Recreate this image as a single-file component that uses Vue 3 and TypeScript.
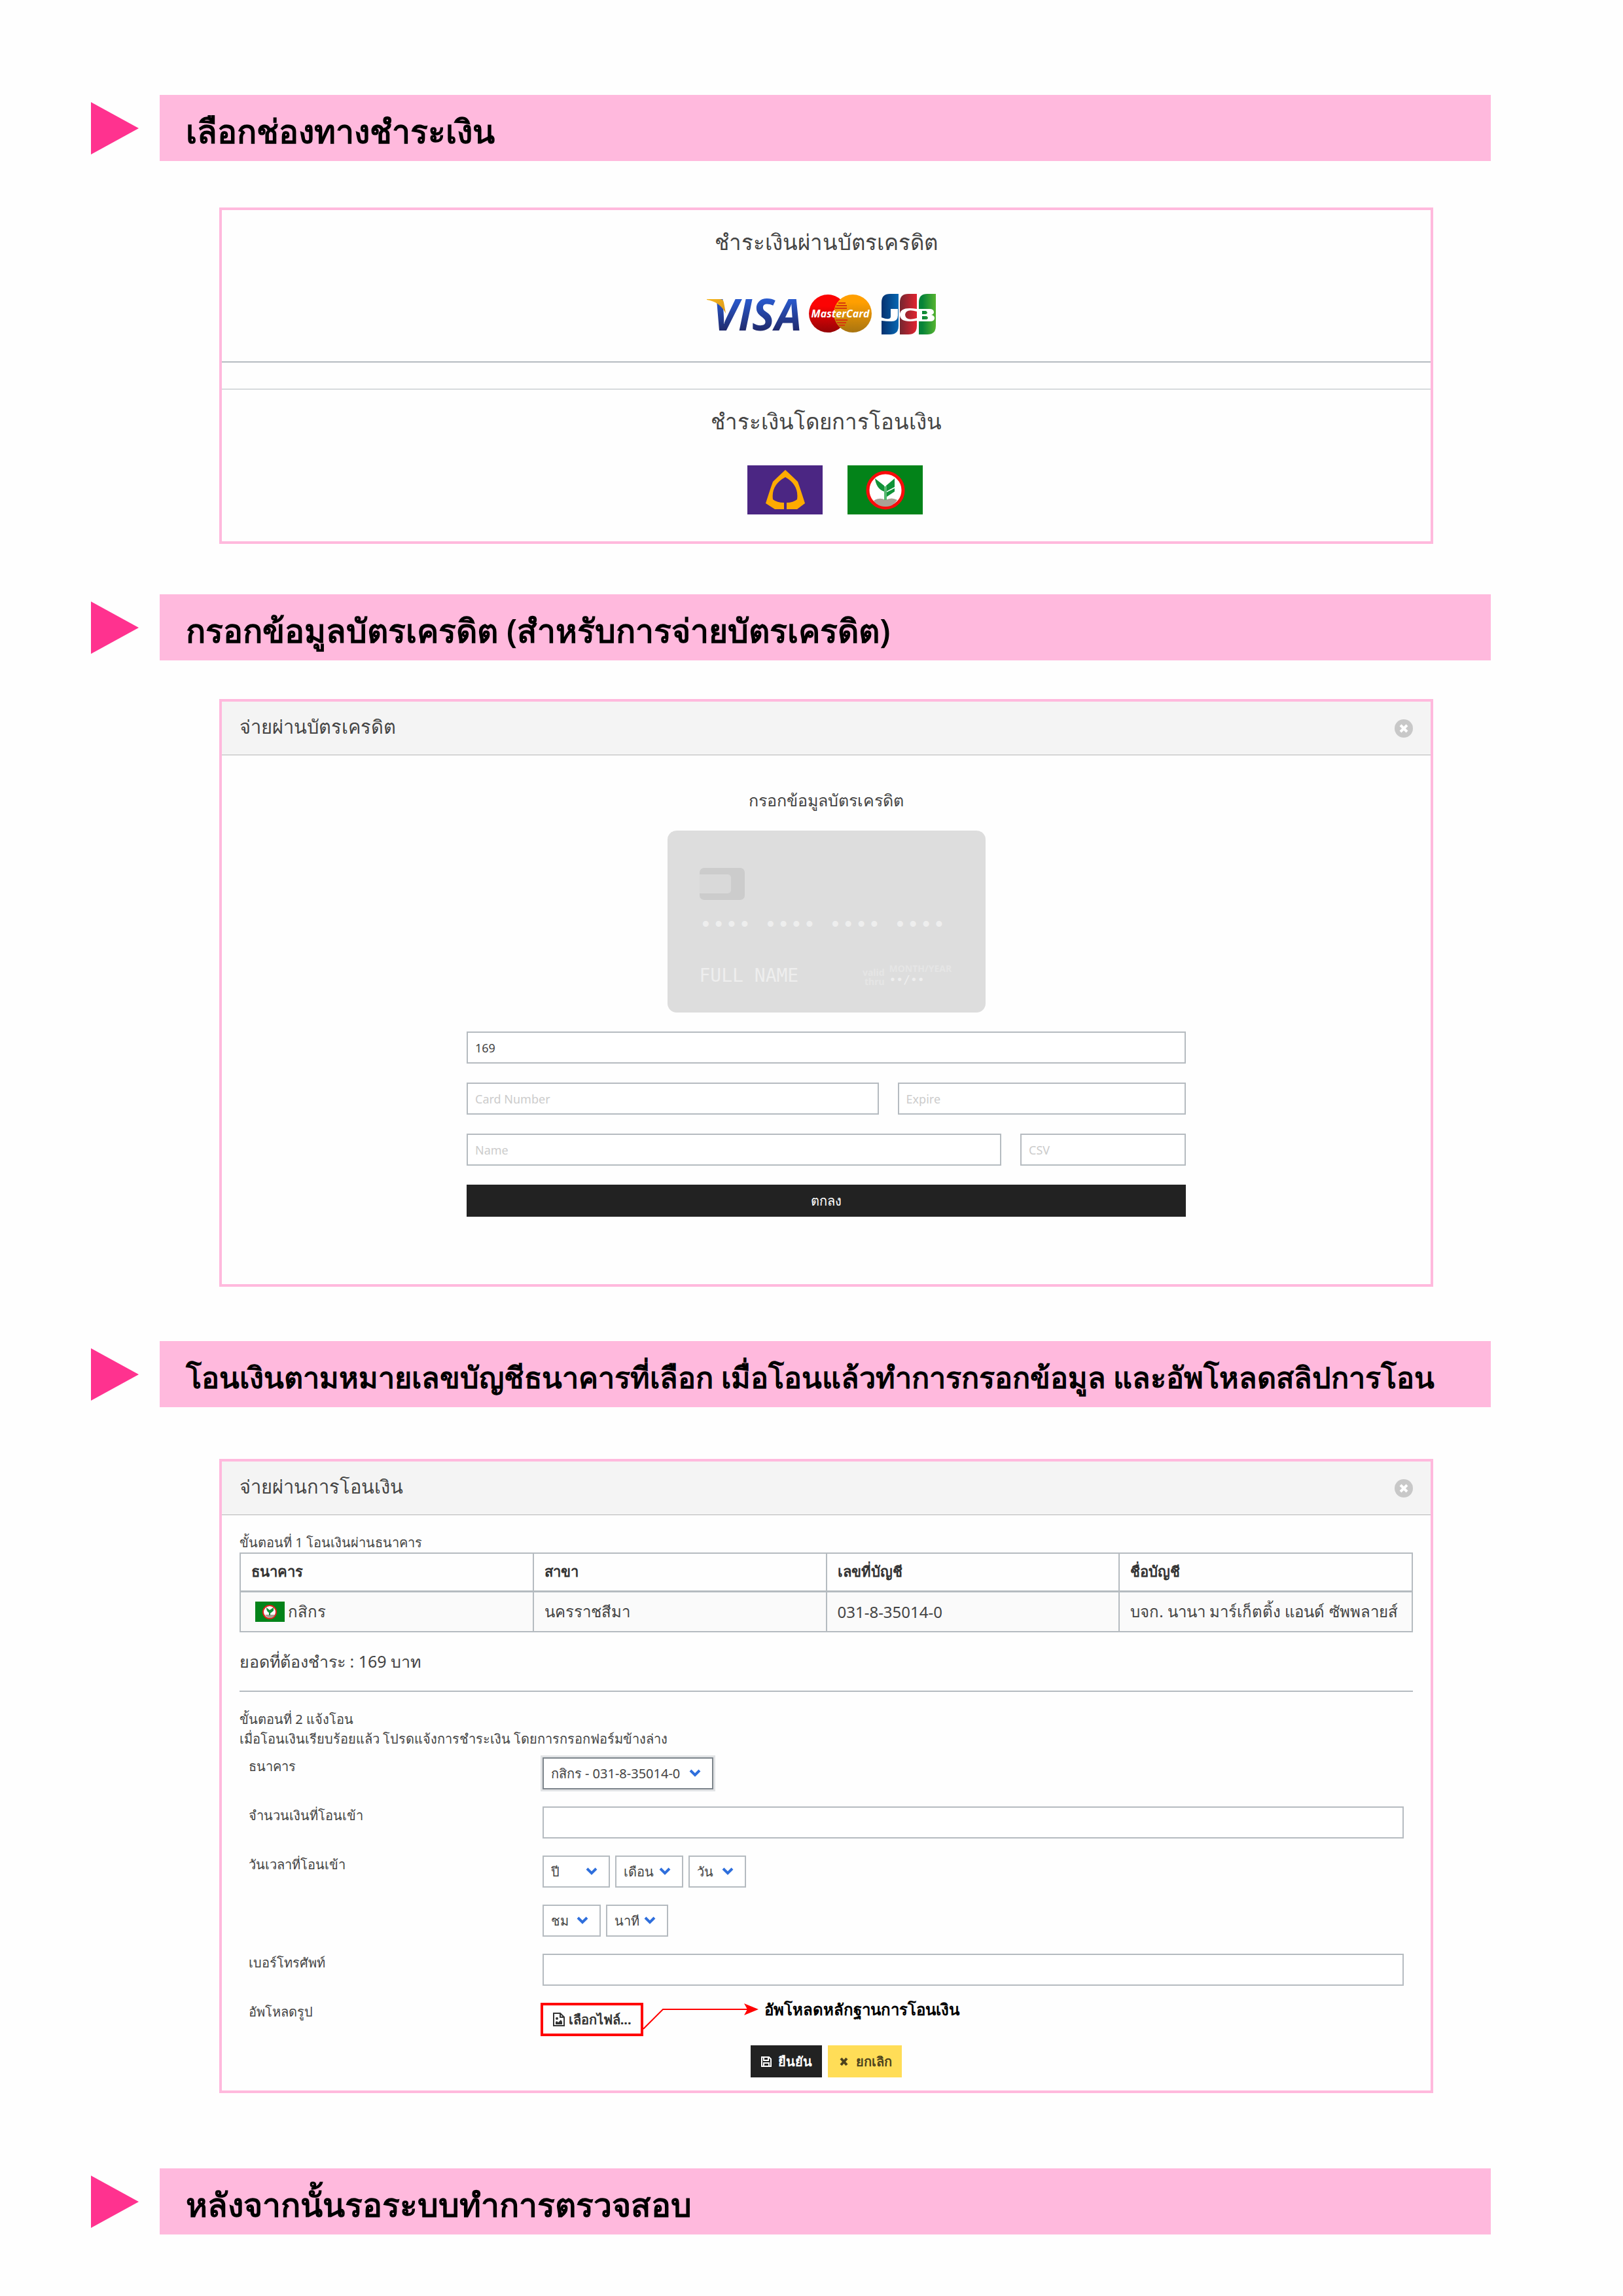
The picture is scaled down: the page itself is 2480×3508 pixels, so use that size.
<script setup lang="ts">
import { ref } from 'vue'

interface Account {
  bank: string
  branch: string
  number: string
  name: string
}

const accounts: Account[] = [
  { bank: 'กสิกร', branch: 'นครราชสีมา', number: '031-8-35014-0', name: 'บจก. นานา มาร์เก็ตติ้ง แอนด์ ซัพพลายส์' },
]

const dateParts = [
  { id: 'year', text: 'ปี', width: 103 },
  { id: 'month', text: 'เดือน', width: 104 },
  { id: 'day', text: 'วัน', width: 88 },
]
const timeParts = [
  { id: 'hour', text: 'ชม', width: 89 },
  { id: 'minute', text: 'นาที', width: 95 },
]

const amount = ref('169')
</script>

<template>
  <main class="page">
    <header class="step">
      <svg class="arrow" viewBox="0 0 73 80" aria-hidden="true"><path d="M0 0 73 40 0 80z" /></svg>
      <h2 class="banner">เลือกช่องทางชำระเงิน</h2>
    </header>

    <section class="panel methods">
      <div class="method">
        <h3 class="method-title">ชำระเงินผ่านบัตรเครดิต</h3>
        <svg class="brands" viewBox="0 0 366 66" role="img" aria-label="VISA MasterCard JCB">
          <defs>
            <linearGradient id="visa" x1="0" y1="0" x2="0" y2="1">
              <stop offset="0.2" stop-color="#2a5fd8" /><stop offset="0.8" stop-color="#20296b" />
            </linearGradient>
            <linearGradient id="gold" x1="0" y1="0" x2="1" y2="1">
              <stop offset="0" stop-color="#f6b61c" /><stop offset="1" stop-color="#d9961a" />
            </linearGradient>
            <linearGradient id="mcr" x1="0" y1="0" x2="0" y2="1">
              <stop offset="0.3" stop-color="#fb0404" /><stop offset="1" stop-color="#950306" />
            </linearGradient>
            <linearGradient id="mcy" x1="0" y1="0" x2="0" y2="1">
              <stop offset="0.2" stop-color="#ff9f00" /><stop offset="1" stop-color="#a87410" />
            </linearGradient>
            <linearGradient id="jb"><stop offset="0" stop-color="#05316f" /><stop offset="1" stop-color="#0767b2" /></linearGradient>
            <linearGradient id="jr"><stop offset="0" stop-color="#75262f" /><stop offset="1" stop-color="#e12330" /></linearGradient>
            <linearGradient id="jg"><stop offset="0.2" stop-color="#068338" /><stop offset="1" stop-color="#55b430" /></linearGradient>
          </defs>
          <text class="visa" x="9" y="57" fill="url(#visa)">VISA</text>
          <path d="M0 9h20q5 0 6 5l3 17Q20 13 0 10z" fill="url(#gold)" />
          <circle cx="185" cy="31" r="29" fill="url(#mcr)" />
          <circle cx="223" cy="31" r="29" fill="url(#mcy)" />
          <path d="M201 15h11M198 19h16M196 23h18M197 41h18M199 45h14M202 49h9" stroke="#d6390c" stroke-width="2" />
          <text class="master" x="204" y="37">MasterCard</text>
          <path d="M267 14Q267 1 280 1h13v49q0 13-13 13h-13z" fill="url(#jb)" />
          <path d="M295 14Q295 1 308 1h13v49q0 13-13 13h-13z" fill="url(#jr)" />
          <path d="M324 14Q324 1 337 1h13v49q0 13-13 13h-13z" fill="url(#jg)" />
          <path d="M267 37q13 5 14-1V24h11v10q0 9-10 9-8 0-15-1z" fill="#fff" />
          <path d="M321 28q-17-5-18 5 1 10 18 5v4q-26 4-26-9 0-13 26-9z" fill="#fff" />
          <path fill-rule="evenodd" d="M324 24h16q7 0 7 5 0 3-4 4 5 1 5 5 0 5-7 5h-17zM329 27v5h6q4-2 0-5zM329 35v5h7q4-2 0-5z" fill="#fff" />
        </svg>
      </div>
      <hr class="rule" />
      <div class="method transfer">
        <h3 class="method-title">ชำระเงินโดยการโอนเงิน</h3>
        <div class="flags">
          <svg class="flag" viewBox="0 0 115 75" role="img" aria-label="ไทยพาณิชย์">
            <path d="M0 0h115v75H0z" fill="#4b2683" />
            <path d="M58 7Q70 18 77 25Q82 39 88 58L76 67H60V57Q70 57 76 52Q79 30 58 18Q36 30 39 52Q45 57 56 57V67H42L28 58Q34 39 39 25Q46 18 58 7z" fill="#ffab00" />
          </svg>
          <svg class="flag" viewBox="0 0 115 75" role="img" aria-label="กสิกรไทย">
            <path d="M0 0h115v75H0z" fill="#038319" />
            <circle cx="58" cy="38" r="27" fill="#fff" stroke="#f90b0b" stroke-width="5" />
            <path d="M40 54q9-6 18-1 10-5 18 0-6 10-18 10T40 54z" fill="#aaa096" />
            <path d="M42 20 56 31v9q-12-4-14-20zM72 20v13L59 40v-9zM72 35v5L60 48v-7z" fill="#109338" />
            <path d="M58 32v21" stroke="#58b770" stroke-width="4" />
          </svg>
        </div>
      </div>
    </section>

    <header class="step step-card">
      <svg class="arrow" viewBox="0 0 73 80" aria-hidden="true"><path d="M0 0 73 40 0 80z" /></svg>
      <h2 class="banner">กรอกข้อมูลบัตรเครดิต (สำหรับการจ่ายบัตรเครดิต)</h2>
    </header>

    <section class="panel panel-card">
      <div class="panel-head">
        <h3 class="panel-title">จ่ายผ่านบัตรเครดิต</h3>
        <button class="close" type="button" aria-label="ปิด">
          <svg viewBox="0 0 28 28"><circle cx="14" cy="14" r="14" /><path d="m9 9 10 10M19 9 9 19" /></svg>
        </button>
      </div>
      <div class="card-body">
        <h4 class="card-title">กรอกข้อมูลบัตรเครดิต</h4>
        <div class="credit-card">
          <div class="chip"><span class="chip-inner"></span></div>
          <div class="card-number">•••• •••• •••• ••••</div>
          <div class="card-foot">
            <span class="card-name">FULL NAME</span>
            <span class="valid">valid<br />thru</span>
            <span class="expiry"><small class="expiry-label">MONTH/YEAR</small><span>••/••</span></span>
          </div>
        </div>
        <form class="card-form" @submit.prevent>
          <input v-model="amount" class="field" type="text" aria-label="จำนวนเงิน" />
          <div class="row">
            <input class="field number" type="text" placeholder="Card Number" aria-label="Card Number" />
            <input class="field expire" type="text" placeholder="Expire" aria-label="Expire" />
          </div>
          <div class="row">
            <input class="field name" type="text" placeholder="Name" aria-label="Name" />
            <input class="field csv" type="text" placeholder="CSV" aria-label="CSV" />
          </div>
          <button class="submit" type="submit">ตกลง</button>
        </form>
      </div>
    </section>

    <header class="step step-transfer">
      <svg class="arrow" viewBox="0 0 73 80" aria-hidden="true"><path d="M0 0 73 40 0 80z" /></svg>
      <h2 class="banner banner-long">โอนเงินตามหมายเลขบัญชีธนาคารที่เลือก เมื่อโอนแล้วทำการกรอกข้อมูล และอัพโหลดสลิปการโอน</h2>
    </header>

    <section class="panel panel-transfer">
      <div class="panel-head">
        <h3 class="panel-title">จ่ายผ่านการโอนเงิน</h3>
        <button class="close" type="button" aria-label="ปิด">
          <svg viewBox="0 0 28 28"><circle cx="14" cy="14" r="14" /><path d="m9 9 10 10M19 9 9 19" /></svg>
        </button>
      </div>
      <div class="transfer-body">
        <p class="note">ขั้นตอนที่ 1 โอนเงินผ่านธนาคาร</p>
        <table class="accounts">
          <thead>
            <tr><th scope="col">ธนาคาร</th><th scope="col">สาขา</th><th scope="col">เลขที่บัญชี</th><th scope="col">ชื่อบัญชี</th></tr>
          </thead>
          <tbody>
            <tr v-for="a in accounts" :key="a.number">
              <td>
                <span class="bank">
                  <svg class="mini-flag" viewBox="0 0 45 31" aria-hidden="true">
                    <path d="M0 0h45v31H0z" fill="#038319" />
                    <circle cx="22" cy="16" r="10" fill="#fff" stroke="#e2201f" stroke-width="2" />
                    <path d="M15 20h15q-2 5-7 5t-8-5z" fill="#aaa096" />
                    <path d="M17 9l5 4 6-4v5l-5 4v3h-2v-4q-4-2-4-8z" fill="#109338" />
                  </svg>{{ a.bank }}
                </span>
              </td>
              <td>{{ a.branch }}</td>
              <td>{{ a.number }}</td>
              <td>{{ a.name }}</td>
            </tr>
          </tbody>
        </table>
        <p class="total">ยอดที่ต้องชำระ : 169 บาท</p>
        <hr class="rule" />
        <p class="note note-second">ขั้นตอนที่ 2 แจ้งโอน<br />เมื่อโอนเงินเรียบร้อยแล้ว โปรดแจ้งการชำระเงิน โดยการกรอกฟอร์มข้างล่าง</p>

        <form class="transfer-form" @submit.prevent>
          <label class="label" for="bank">ธนาคาร</label>
          <div class="controls">
            <span class="select focused">
              <select id="bank" style="width: 261px"><option>กสิกร - 031-8-35014-0</option></select>
              <svg class="chevron" viewBox="0 0 18 13" aria-hidden="true"><path d="m2 3 7 7 7-7" /></svg>
            </span>
          </div>

          <label class="label" for="paid">จำนวนเงินที่โอนเข้า</label>
          <input id="paid" class="field" type="text" />

          <label class="label" for="year">วันเวลาที่โอนเข้า</label>
          <div class="controls">
            <span v-for="p in dateParts" :key="p.id" class="select">
              <select :id="p.id" :aria-label="p.text" :style="{ width: p.width + 'px' }"><option>{{ p.text }}</option></select>
              <svg class="chevron" viewBox="0 0 18 13" aria-hidden="true"><path d="m2 3 7 7 7-7" /></svg>
            </span>
          </div>

          <div class="controls time">
            <span v-for="p in timeParts" :key="p.id" class="select">
              <select :id="p.id" :aria-label="p.text" :style="{ width: p.width + 'px' }"><option>{{ p.text }}</option></select>
              <svg class="chevron" viewBox="0 0 18 13" aria-hidden="true"><path d="m2 3 7 7 7-7" /></svg>
            </span>
          </div>

          <label class="label" for="phone">เบอร์โทรศัพท์</label>
          <input id="phone" class="field" type="tel" />

          <label class="label" for="slip">อัพโหลดรูป</label>
          <div class="upload">
            <label class="file">
              <input id="slip" class="file-input" type="file" accept="image/*" />
              <svg class="file-icon" viewBox="0 0 18 21" aria-hidden="true">
                <path d="M1 1h10l6 6v13H1zM11 1v6h6" fill="none" stroke="currentColor" stroke-width="2" />
                <path d="M4 18v-4l2-1 2 2 4-4 2 3v4z" fill="currentColor" /><circle cx="6" cy="9" r="2" fill="currentColor" />
              </svg>
              เลือกไฟล์...
            </label>
            <svg class="pointer" viewBox="0 0 176 42" aria-hidden="true">
              <path d="M0 40 30 10H160" fill="none" stroke="#f00" stroke-width="2" /><path d="m154 1 22 9-22 9 5-9z" fill="#f00" />
            </svg>
            <span class="hint">อัพโหลดหลักฐานการโอนเงิน</span>
          </div>

          <div class="actions">
            <button class="button confirm" type="submit">
              <svg viewBox="0 0 18 18" aria-hidden="true"><path d="M2 2h11l3 3v11H2zM5 2v5h7V2M5 16v-5h8v5" /></svg>ยืนยัน
            </button>
            <button class="button cancel" type="button">
              <svg viewBox="0 0 18 18" aria-hidden="true"><path class="cross" d="m4 4 9 10M13 4 4 14" /></svg>ยกเลิก
            </button>
          </div>
        </form>
      </div>
    </section>

    <header class="step step-last">
      <svg class="arrow" viewBox="0 0 73 80" aria-hidden="true"><path d="M0 0 73 40 0 80z" /></svg>
      <h2 class="banner">หลังจากนั้นรอระบบทำการตรวจสอบ</h2>
    </header>
  </main>
</template>

<style>
body {
  margin: 0;
  background: #fefefe;
}
</style>

<style scoped>
.page,
.page * {
  box-sizing: border-box;
}
.page {
  padding: 145px 202px 93px 139px;
  background: #fefefe;
  color: #444;
  font-family: "Noto Sans", sans-serif;
  font-size: 20px;
}
h2,
h3,
h4,
p {
  margin: 0;
  font-weight: 400;
}
button,
input,
select {
  font-family: inherit;
  color: inherit;
  margin: 0;
}

.step {
  display: flex;
  align-items: center;
  gap: 32px;
}
.step-card { margin-top: 77px; }
.step-transfer { margin-top: 83px; }
.step-last { margin-top: 115px; }
.arrow {
  flex: none;
  width: 73px;
  height: 80px;
  fill: #ff328f;
}
.banner {
  flex: 1;
  min-width: 0;
  height: 101px;
  padding: 0 40px;
  background: #ffb9dd;
  color: #000;
  font-size: 50px;
  font-weight: 600;
  line-height: 110px;
  white-space: nowrap;
}
.banner-long { font-size: 45px; }

.panel {
  margin: 71px 88px 0 196px;
  border: 4px solid #ffb9dd;
}
.panel-card { margin-top: 59px; }
.panel-transfer { margin-top: 79px; }

.rule {
  height: 2px;
  margin: 0;
  border: 0;
  background: #b5bbc0;
}
.method {
  display: flex;
  flex-direction: column;
  align-items: center;
  padding: 25px 0 38px;
}
.transfer {
  margin-top: 40px;
  padding-bottom: 41px;
  border-top: 1px solid #b5bbc0;
}
.method-title {
  font-size: 33px;
  line-height: 48px;
}
.brands {
  width: 366px;
  height: 66px;
  margin-top: 54px;
  overflow: visible;
}
.visa {
  font: italic 700 66px "Open Sans", sans-serif;
}
.master {
  font: italic 700 16px "Open Sans", sans-serif;
  text-anchor: middle;
  fill: #fff;
}
.flags {
  display: flex;
  gap: 38px;
  margin: 43px 0 0 26px;
}
.flag {
  width: 115px;
  height: 75px;
}

.panel-head {
  display: flex;
  align-items: center;
  justify-content: space-between;
  height: 82px;
  padding: 0 27px;
  border-bottom: 1px solid #b5b5b5;
  background: #f4f4f4;
}
.panel-title {
  padding-bottom: 6px;
  font-size: 29px;
  line-height: 40px;
}
.close {
  width: 28px;
  height: 28px;
  padding: 0;
  border: 0;
  background: none;
}
.close svg {
  display: block;
  fill: #c8c8c8;
  stroke: #fff;
}
.close circle { stroke: none; }
.close path { stroke-width: 4; }

.card-body {
  display: flex;
  flex-direction: column;
  align-items: center;
  padding: 48px 27px 103px;
}
.card-title {
  font-size: 25px;
  line-height: 40px;
}
.credit-card {
  width: 486px;
  height: 278px;
  margin-top: 27px;
  padding: 57px 49px 0;
  border-radius: 14px;
  background: #ddd;
  color: #eee;
  font-family: "DejaVu Sans Mono", monospace;
}
.chip {
  width: 69px;
  height: 49px;
  padding-top: 10px;
  border-radius: 7px;
  background: #ccc;
}
.chip-inner {
  display: block;
  width: 48px;
  height: 29px;
  border-radius: 0 5px 5px 0;
  background: #d9d9d9;
}
.card-number {
  margin-top: 20px;
  font-family: "Liberation Mono", monospace;
  font-size: 33px;
  line-height: 40px;
  white-space: nowrap;
}
.card-foot {
  display: flex;
  align-items: flex-end;
  margin-top: 38px;
}
.card-name {
  flex: 1;
  font-size: 28px;
  line-height: 32px;
}
.valid,
.expiry-label {
  color: #e5e5e5;
  font: 700 14px/14px "Noto Sans", sans-serif;
}
.valid {
  margin-right: 7px;
  text-align: right;
}
.expiry {
  display: flex;
  flex-direction: column;
  width: 98px;
  font-size: 18px;
  line-height: 20px;
}
.card-form {
  display: flex;
  flex-direction: column;
  gap: 29px;
  width: 100%;
  max-width: 1099px;
  margin-top: 29px;
}
.row {
  display: flex;
  gap: 29px;
}
.field {
  width: 100%;
  height: 49px;
  padding: 0 11px;
  border: 2px solid #b5bbc0;
  border-radius: 0;
  background: #fff;
  font-size: 18px;
}
.field::placeholder { color: #ccc; opacity: 1; }
.number { flex: 603; }
.expire { flex: 414; }
.name { flex: 791; }
.csv { flex: 227; }
.submit {
  height: 49px;
  border: 0;
  background: #222;
  color: #fff;
  font-size: 20px;
}

.transfer-body { padding: 27px 27px 20px; }
.note {
  font-size: 20px;
  line-height: 30px;
}
.accounts {
  width: 100%;
  border-collapse: collapse;
  table-layout: fixed;
}
.accounts th,
.accounts td {
  padding: 0 16px;
  border: 2px solid #b5bbc0;
  text-align: left;
  white-space: nowrap;
}
.accounts th {
  height: 58px;
  border-bottom-width: 3px;
  color: #333;
  font-size: 22px;
}
.accounts td {
  height: 62px;
  background: #fafafa;
  font-size: 24px;
}
.bank {
  display: flex;
  align-items: center;
  gap: 5px;
  padding-left: 6px;
}
.mini-flag {
  width: 45px;
  height: 31px;
}
.total {
  margin: 24px 0 25px;
  font-size: 25px;
  line-height: 40px;
}
.note-second { margin-top: 27px; }
.transfer-form {
  display: grid;
  grid-template-columns: 1fr 3fr;
  column-gap: 10px;
  row-gap: 26px;
  margin-top: 13px;
  padding: 0 14px;
}
.label {
  font-size: 20px;
  line-height: 28px;
}
.controls {
  display: flex;
  gap: 8px;
}
.time { grid-column: 2; }
.select { position: relative; }
.select select {
  display: block;
  height: 49px;
  padding: 0 0 0 11px;
  border: 2px solid #b5bbc0;
  border-radius: 0;
  background: #fff;
  appearance: none;
  font-size: 20px;
}
.focused select {
  border-color: #7d858c;
  box-shadow: 0 0 0 3px #e1e3e5;
}
.chevron {
  position: absolute;
  top: 17px;
  right: 19px;
  width: 18px;
  height: 13px;
  fill: none;
  stroke: #2f6fdc;
  stroke-width: 4;
}
.upload {
  display: flex;
  align-items: flex-start;
  height: 49px;
  margin-left: -3px;
}
.file {
  display: flex;
  align-items: center;
  gap: 6px;
  width: 157px;
  height: 51px;
  padding-left: 15px;
  border: 4px solid #f00;
  color: #333;
  font-size: 20px;
  font-weight: 700;
  white-space: nowrap;
}
.file-input {
  position: absolute;
  width: 1px;
  height: 1px;
  opacity: 0;
}
.file-icon {
  flex: none;
  width: 18px;
  height: 21px;
}
.pointer {
  width: 176px;
  height: 42px;
}
.hint {
  margin-left: 9px;
  color: #000;
  font-size: 24px;
  font-weight: 600;
  line-height: 20px;
}
.actions {
  display: flex;
  grid-column: 1 / -1;
  justify-content: center;
  gap: 9px;
  margin-top: -10px;
}
.button {
  display: flex;
  align-items: center;
  justify-content: center;
  gap: 9px;
  height: 49px;
  padding: 0;
  border: 0;
  font-size: 20px;
  font-weight: 700;
}
.button svg {
  width: 18px;
  height: 18px;
  fill: none;
  stroke: currentColor;
  stroke-width: 2;
}
.button .cross { stroke-width: 4; }
.confirm {
  width: 109px;
  background: #222;
  color: #fff;
}
.cancel {
  width: 113px;
  background: #ffdd57;
  color: #4d431d;
}
</style>
